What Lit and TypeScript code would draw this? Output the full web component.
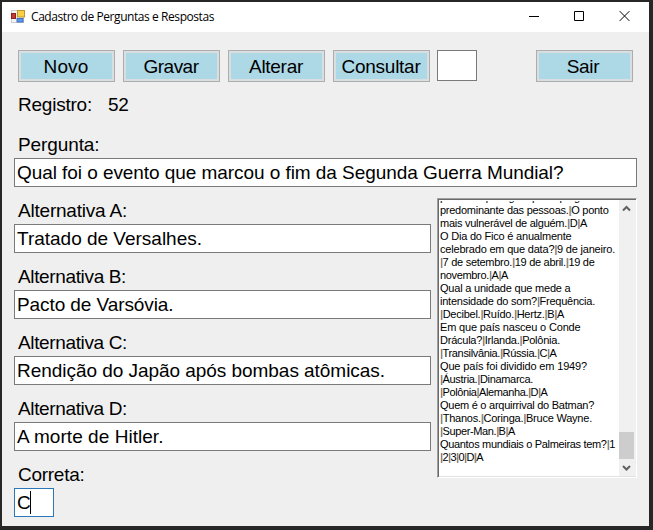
import { LitElement, html, css, svg } from "lit";
import { customElement, property } from "lit/decorators.js";

/* One line of text whose tracking is adjusted so that it spans a given width. */
@customElement("fit-text")
class FitText extends LitElement {
  @property() text = "";
  @property({ type: Number }) span = 0;

  static styles = css`
    :host { display: block; white-space: pre; }
    .pipe { color: #6c655c; text-shadow: 0.6px 0 #b9b0a4; }
  `;

  render() {
    return html`<span class="line">${this.text.split(/(\|)/).map((part) =>
      part === "|" ? html`<span class="pipe">|</span>` : part)}</span>`;
  }

  updated() {
    const line = this.renderRoot.querySelector(".line") as HTMLElement;
    line.style.letterSpacing = "0px";
    const natural = line.getBoundingClientRect().width;
    if (this.span) line.style.letterSpacing = (this.span - natural) / this.text.length + "px";
  }
}

const BUTTONS: [string, number][] = [["Novo", 45], ["Gravar", 55], ["Alterar", 54], ["Consultar", 79]];

const ANSWERS: [string, number, string, number][] = [
  ["Alternativa A:", 109, "Tratado de Versalhes.", 185],
  ["Alternativa B:", 108, "Pacto de Varsóvia.", 156.5],
  ["Alternativa C:", 109, "Rendição do Japão após bombas atômicas.", 368],
  ["Alternativa D:", 109, "A morte de Hitler.", 146.5],
];

const LOG: [string, number][] = [
  ["pessoas que agem pelo tipo g", 140],
  ["predominante das pessoas.|O ponto", 168.5],
  ["mais vulnerável de alguém.|D|A", 147],
  ["O Dia do Fico é anualmente", 131.5],
  ["celebrado em que data?|9 de janeiro.", 175],
  ["|7 de setembro.|19 de abril.|19 de", 154.5],
  ["novembro.|A|A", 68],
  ["Qual a unidade que mede a", 130.5],
  ["intensidade do som?|Frequência.", 155],
  ["|Decibel.|Ruído.|Hertz.|B|A", 124],
  ["Em que país nasceu o Conde", 140.5],
  ["Drácula?|Irlanda.|Polônia.", 120],
  ["|Transilvânia.|Rússia.|C|A", 116.5],
  ["Que país foi dividido em 1949?", 147],
  ["|Áustria.|Dinamarca.", 93],
  ["|Polônia|Alemanha.|D|A", 107.5],
  ["Quem é o arquirrival do Batman?", 154],
  ["|Thanos.|Coringa.|Bruce Wayne.", 152],
  ["|Super-Man.|B|A", 75],
  ["Quantos mundiais o Palmeiras tem?|1", 175],
  ["|2|3|0|D|A", 43],
];

@customElement("app-root")
class AppRoot extends LitElement {
  static styles = css`
    :host {
      display: block; box-sizing: border-box; width: 653px; height: 530px;
      padding: 2px 4px 4px 2px; background: #282728; overflow: hidden;
      font-family: "Liberation Sans", Arial, sans-serif; color: #000;
    }
    * { box-sizing: border-box; }
    .window { width: 647px; height: 524px; background: #efefef; }
    .titlebar { display: flex; align-items: center; height: 30px; background: #fff; padding-left: 9px; }
    .app-icon { width: 14px; height: 14px; display: block; }
    .title { margin-left: 6px; flex: 1; font: 12px/16px "Open Sans", "Noto Sans", sans-serif; }
    .caption { width: 46px; height: 30px; display: block; }
    .caption:last-child { width: 45px; }
    .content { padding: 18px 12px 0; font-size: 19px; line-height: 22px; }
    .toolbar { display: flex; align-items: flex-start; padding: 0 4px; gap: 8px; }
    .button {
      width: 97px; height: 32px; border: 1px solid #adadad; background: #add8e6;
      box-shadow: inset 0 0 0 2px #d9dfe1; display: flex; justify-content: center; padding: 5px 1px 0 0;
    }
    .exit { margin-left: auto; padding-right: 3px; }
    .field { border: 1px solid #7a7a7a; background: #fff; height: 29px; padding: 3px 2px; }
    .code { width: 40px; height: 31px; margin-left: -1px; }
    .label { padding: 1px 0 0 4px; height: 25px; }
    .record { display: flex; gap: 16px; padding: 12px 4px 0; height: 51px; }
    .columns { display: flex; justify-content: space-between; }
    .answers { width: 417px; padding-top: 12px; }
    .answers .field { margin-bottom: 12px; }
    .answers .correct { width: 40px; border-color: #2a78b8; display: flex; }
    .caret { width: 1px; height: 23px; background: #000; margin: -1px 0 0 0; }
    .log {
      display: flex; width: 200px; height: 280px; margin-top: 11px; background: #fff;
      border: 1px solid; border-color: #a0a0a0 #fff #fff #a0a0a0;
      box-shadow: inset 1px 1px 0 #696969, inset -1px -1px 0 #e3e3e3; padding: 1px 0 1px 2px;
    }
    .lines { flex: 1; min-width: 0; overflow: hidden; margin-top: 1px; height: 275px; display: flex; flex-direction: column; justify-content: flex-end; font-size: 11px; line-height: 13px; padding-bottom: 12px; }
    .lines fit-text { flex: none; }
    .scroll { width: 17px; background: #f0f0f0; display: flex; flex-direction: column; }
    .arrow { width: 17px; height: 17px; display: block; }
    .track { flex: 1; display: flex; align-items: flex-end; }
    .thumb { width: 15px; height: 27px; background: #cdcdcd; }
  `;

  render() {
    return html`<div class="window">
      <div class="titlebar">
        ${this.icon()}
        <fit-text class="title" .text=${"Cadastro de Perguntas e Respostas"} .span=${183}></fit-text>
        ${this.caption(svg`<path d="M17 14.5h10"/>`)}
        ${this.caption(svg`<path d="M16.5 9.5h9v9h-9z"/>`)}
        ${this.caption(svg`<path d="M16 9l10 10M26 9l-10 10"/>`)}
      </div>
      <div class="content">
        <div class="toolbar">
          ${BUTTONS.map(([t, w]) => html`<div class="button"><fit-text .text=${t} .span=${w}></fit-text></div>`)}
          <div class="field code"></div>
          <div class="button exit"><fit-text .text=${"Sair"} .span=${32.5}></fit-text></div>
        </div>
        <div class="record">
          <fit-text .text=${"Registro:"} .span=${74}></fit-text>
          <fit-text .text=${"52"} .span=${20.5}></fit-text>
        </div>
        <fit-text class="label" .text=${"Pergunta:"} .span=${81.5}></fit-text>
        <div class="field"><fit-text .text=${"Qual foi o evento que marcou o fim da Segunda Guerra Mundial?"} .span=${546.5}></fit-text></div>
        <div class="columns">
          <div class="answers">
            ${ANSWERS.map(([l, lw, v, vw]) => html`
              <fit-text class="label" .text=${l} .span=${lw}></fit-text>
              <div class="field"><fit-text .text=${v} .span=${vw}></fit-text></div>`)}
            <fit-text class="label" .text=${"Correta:"} .span=${66.5}></fit-text>
            <div class="field correct"><fit-text .text=${"C"} .span=${13}></fit-text><div class="caret"></div></div>
          </div>
          <div class="log">
            <div class="lines">${LOG.map(([t, w]) => html`<fit-text .text=${t} .span=${w}></fit-text>`)}</div>
            <div class="scroll">
              ${this.arrow("M4 10.5L7.5 7l3.5 3.5")}
              <div class="track"><div class="thumb"></div></div>
              ${this.arrow("M4 7L7.5 10.5L11 7")}
            </div>
          </div>
        </div>
      </div>
    </div>`;
  }

  private caption(shape: unknown) {
    return html`<svg class="caption" viewBox="0 0 46 30" fill="none" stroke="#000" stroke-width="1">${shape}</svg>`;
  }

  private arrow(d: string) {
    return html`<svg class="arrow" viewBox="0 0 17 17" fill="none" stroke="#606060" stroke-width="2"><path d=${d}/></svg>`;
  }

  private icon() {
    return html`<svg class="app-icon" viewBox="0 0 14 14">
      <rect x="0.5" y="0.5" width="12" height="12" fill="#f4f4f4" stroke="#cccccc"/>
      <rect x="0.5" y="3.5" width="4" height="5" fill="#c33b35" stroke="#8d2020"/>
      <rect x="6.5" y="0.5" width="7" height="6.5" fill="#f8d046" stroke="#c0952a"/>
      <rect x="6" y="8.5" width="6" height="3.5" fill="#5c97ea" stroke="#3f70c4"/>
    </svg>`;
  }
}
